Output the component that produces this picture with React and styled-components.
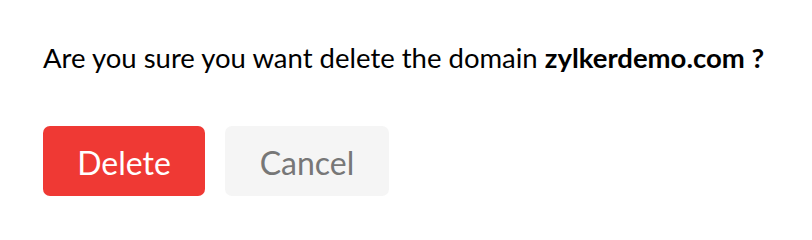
import React from 'react';
import styled, { createGlobalStyle } from 'styled-components';

const GlobalStyle = createGlobalStyle`
  html, body {
    margin: 0;
    padding: 0;
    background: #ffffff;
  }
  body {
    font-family: Lato, "Liberation Sans", sans-serif;
  }
`;

const Dialog = styled.div`
  width: 812px;
  height: 240px;
  box-sizing: border-box;
  padding: 41px 43px 0;
  display: flex;
  flex-direction: column;
  gap: 52px;
`;

const Message = styled.p`
  margin: 0;
  font-size: 27.5px;
  line-height: 33px;
  color: #000000;
  white-space: nowrap;
`;

const Domain = styled.strong`
  font-weight: 700;
`;

const Actions = styled.div`
  display: flex;
  gap: 20px;
`;

const Button = styled.button`
  width: ${(p) => p.$width}px;
  height: 70px;
  padding: 0;
  border: none;
  border-radius: 7px;
  font-family: Lato, "Liberation Sans", sans-serif;
  font-size: 32px;
  line-height: 38px;
  padding-top: 3px;
  background: ${(p) => (p.$danger ? '#ef3934' : '#f5f5f5')};
  color: ${(p) => (p.$danger ? '#ffffff' : '#777777')};
  cursor: pointer;
`;

export default function App() {
  return (
    <>
      <GlobalStyle />
      <Dialog>
        <Message>
          Are you sure you want delete the domain <Domain>zylkerdemo.com ?</Domain>
        </Message>
        <Actions>
          <Button $danger $width={162}>Delete</Button>
          <Button $width={164}>Cancel</Button>
        </Actions>
      </Dialog>
    </>
  );
}
